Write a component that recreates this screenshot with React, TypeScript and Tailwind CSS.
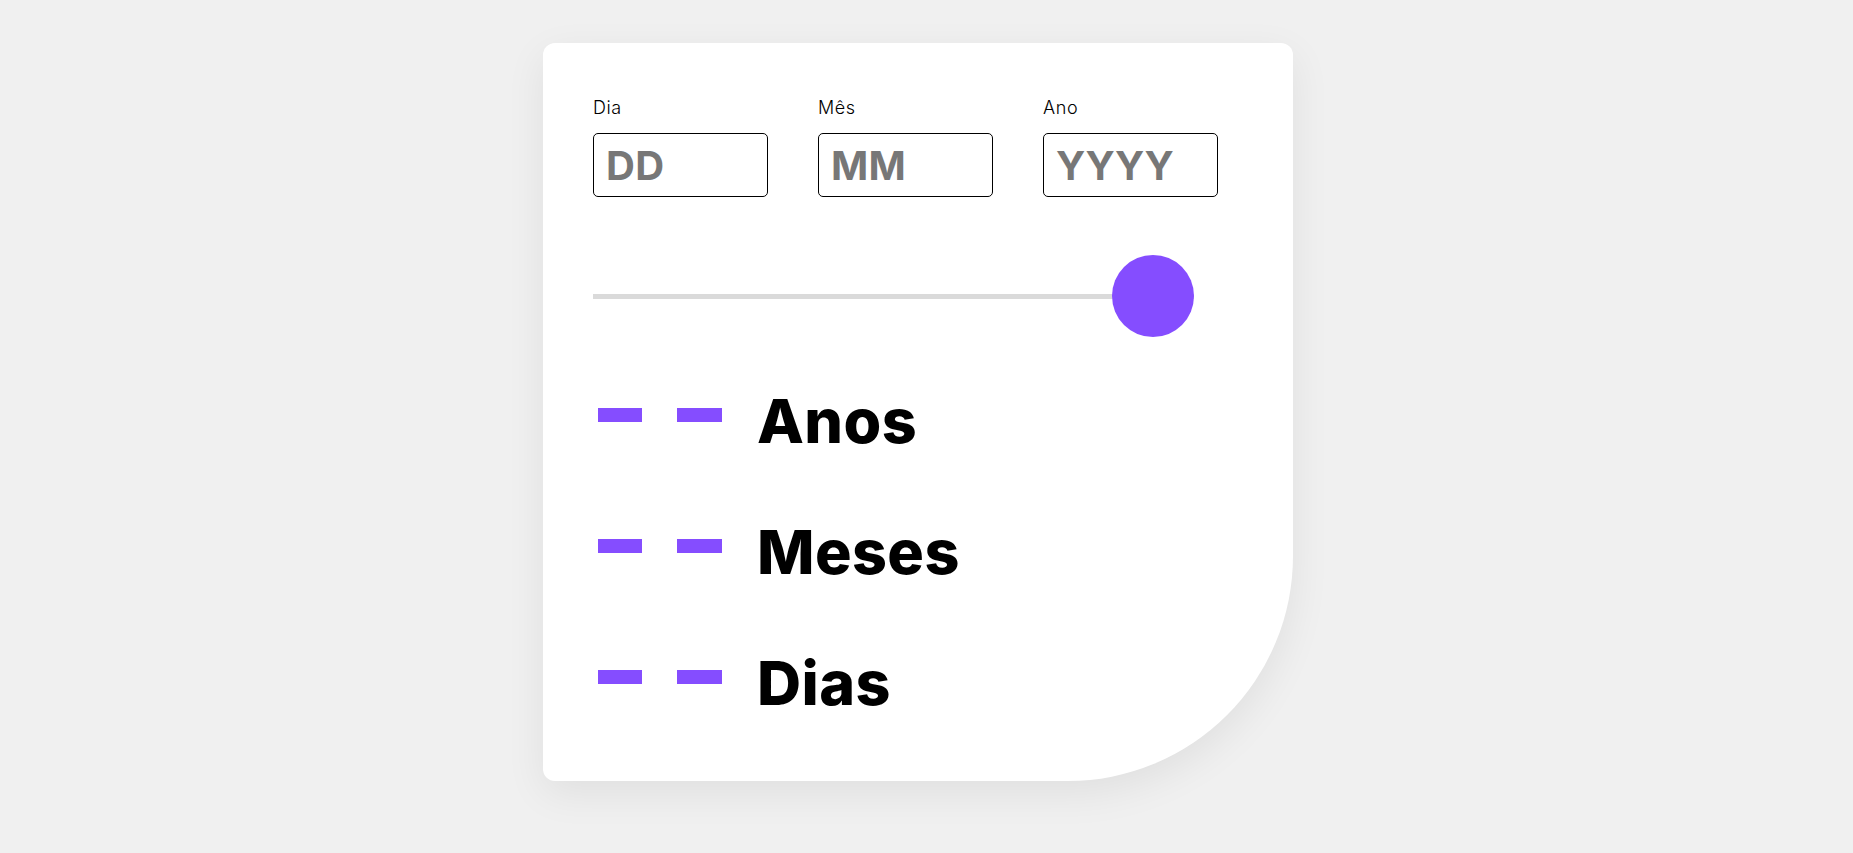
import React from "react";

const fields = [
  { label: "Dia", ph: "DD" },
  { label: "Mês", ph: "MM" },
  { label: "Ano", ph: "YYYY" },
];

const rows = ["Anos", "Meses", "Dias"];

export default function App() {
  return (
    <div
      className="min-h-screen w-full bg-[#f0f0f0] flex justify-center pt-[43px] pr-[17px]"
      style={{ fontFamily: "Inter, 'Open Sans', sans-serif" }}
    >
      <div className="w-[750px] h-[738px] bg-white rounded-[12px] rounded-br-[225px] shadow-[0_12px_40px_rgba(0,0,0,0.07)] pl-[50px] pt-[56px] flex flex-col">
        <div className="flex gap-[50px]">
          {fields.map((f) => (
            <div key={f.label} className="flex flex-col">
              <label className="text-[18px] leading-none text-black font-light tracking-[0.6px]">{f.label}</label>
              <input
                placeholder={f.ph}
                className="mt-[16px] w-[175px] h-[64px] border border-black rounded-[5px] pl-[12px] text-[40px] font-bold text-[#777] placeholder:text-[#777] outline-none tracking-[0.3px]"
              />
            </div>
          ))}
        </div>

        <div className="mt-[58px] h-[82px] w-[601px] relative flex items-center">
          <div className="h-[5px] w-full bg-[#dadada]" />
          <div className="absolute right-0 top-0 w-[82px] h-[82px] rounded-full bg-[#854dff]" />
        </div>

        <div className="mt-[19px] flex flex-col">
          {rows.map((r) => (
            <div key={r} className="h-[131px] flex items-center">
              <div className="flex items-center gap-[35px] ml-[5px] mb-[14px]">
                <div className="w-[44px] h-[14px] bg-[#854dff]" />
                <div className="w-[45px] h-[14px] bg-[#854dff]" />
              </div>
              <span className="ml-[35px] text-[61px] leading-none font-extrabold text-black tracking-[0.4px]">
                {r}
              </span>
            </div>
          ))}
        </div>
      </div>
    </div>
  );
}
